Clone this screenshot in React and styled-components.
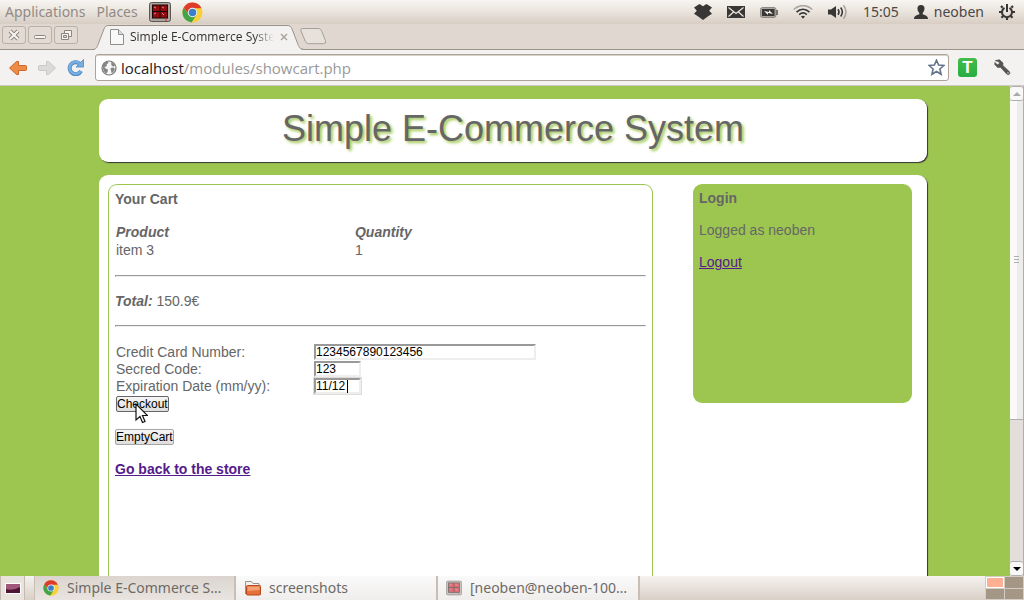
import React from "react";
import styled, { createGlobalStyle } from "styled-components";

const green = "#9dc650";
const ui = `"Noto Sans", "Open Sans", sans-serif`;
const uiNarrow = `"Open Sans", "Noto Sans", sans-serif`;

const GlobalStyle = createGlobalStyle`
  *, *::before, *::after { box-sizing: border-box; }
  body { margin: 0; font-family: "Liberation Sans", Arial, sans-serif; font-size: 14px; line-height: 16px; color: #666; }
  button, input { font-family: inherit; }
  svg { display: block; flex: none; }
`;

const Desktop = styled.div`
  height: 100vh;
  display: flex;
  flex-direction: column;
  overflow: hidden;
`;

/* ---------- top panel ---------- */
const Panel = styled.header`
  flex: none;
  height: 24px;
  display: flex;
  align-items: center;
  justify-content: space-between;
  padding: 0 9px 0 5px;
  background: linear-gradient(#f7f5f2, #e9e3dc 50%, #d7cdc3);
  font: 14px/24px ${ui};
  color: #4b4846;
`;
const PanelGroup = styled.div`
  display: flex;
  align-items: center;
  gap: ${(p) => p.$gap}px;
`;
const PanelButton = styled.button`
  display: flex;
  align-items: center;
  gap: 6px;
  height: 24px;
  padding: 0;
  border: 0;
  background: none;
  font: inherit;
  color: ${(p) => (p.$muted ? "#918b86" : "#4b4846")};
`;

/* ---------- browser chrome ---------- */
const TabStrip = styled.div`
  flex: none;
  height: 26px;
  display: flex;
  background: #dfd7d0;
  border-bottom: 1px solid #9c938a;
`;
const WindowButtons = styled.div`
  display: flex;
  gap: 2px;
  padding: 2px 0 0 2px;
`;
const WindowButton = styled.button`
  width: 24px;
  height: 18px;
  padding: 0;
  display: grid;
  place-items: center;
  border: 1px solid #b9b0a7;
  border-radius: 3px;
  background: #e2dad3;
`;
const Tab = styled.div`
  position: relative;
  width: 214px;
  height: 26px;
  margin-left: 14px;
  display: flex;
  align-items: center;
  padding: 0 18px 0 18px;
`;
const TabShape = styled.svg`
  position: absolute;
  inset: 0;
`;
const TabTitle = styled.span`
  position: relative;
  flex: 1;
  margin-left: 6px;
  overflow: hidden;
  white-space: nowrap;
  font: 12px/24px ${uiNarrow};
  color: #33302e;
  mask-image: linear-gradient(90deg, #000 86%, transparent);
`;
const TabIcon = styled.span`
  position: relative;
`;
const TabClose = styled.button`
  position: relative;
  width: 8px;
  height: 8px;
  margin-left: 6px;
  padding: 0;
  border: 0;
  background: none;
`;
const NewTab = styled.button`
  padding: 4px 0 0;
  border: 0;
  background: none;
  align-self: flex-start;
  margin-left: -7px;
`;
const Toolbar = styled.div`
  flex: none;
  height: 36px;
  display: flex;
  align-items: center;
  padding: 0 13px 0 8px;
  background: #f4f2f1;
  border-bottom: 1px solid #cfc9c3;
`;
const ToolButton = styled.button`
  padding: 0;
  margin-right: ${(p) => p.$after || 0}px;
  border: 0;
  background: none;
`;
const AddressBar = styled.div`
  flex: 1;
  height: 27px;
  display: flex;
  align-items: center;
  gap: 4px;
  padding: 0 3px 0 5px;
  margin-right: 9px;
  background: #fff;
  border: 1px solid #aea398;
  border-radius: 3px;
  box-shadow: inset 0 1px 0 #d8d2cc;
`;
const Url = styled.span`
  flex: 1;
  font: 15px/24px ${uiNarrow};
  color: #999;
  b { font-weight: 400; color: #222; }
`;

/* ---------- web page ---------- */
const Viewport = styled.div`
  flex: 1;
  min-height: 0;
  display: flex;
`;
const Page = styled.main`
  flex: 1;
  min-width: 0;
  display: flex;
  flex-direction: column;
  gap: 13px;
  padding: 13px 82px 0 99px;
  overflow: hidden;
  background: ${green};
`;
const Banner = styled.div`
  flex: none;
  padding: 10px 0 13px;
  background: #fff;
  border-radius: 9px;
  box-shadow: 1px 1px 1px #333;
`;
const Title = styled.h1`
  margin: 0;
  font-size: 36px;
  line-height: 40px;
  font-weight: 400;
  text-align: center;
  text-shadow: 2px 2px 3px ${green};
`;
const Card = styled.div`
  flex: 1;
  display: flex;
  align-items: flex-start;
  gap: 40px;
  padding: 9px 15px 0 9px;
  background: #fff;
  border-radius: 9px 9px 0 0;
  box-shadow: 1px 1px 1px #333;
`;
const Cart = styled.section`
  flex: 1;
  align-self: stretch;
  padding: 6px;
  border: 1px solid ${green};
  border-bottom: 0;
  border-radius: 9px 9px 0 0;
`;
const Login = styled.aside`
  width: 219px;
  min-height: 219px;
  padding: 6px;
  background: ${green};
  border-radius: 9px;
`;
const Heading = styled.h2`
  margin: 0;
  font-size: 14px;
  line-height: 16px;
`;
const Text = styled.p`
  margin: 16px 0;
`;
const Link = styled.a`
  color: #551a8b;
  font-weight: ${(p) => (p.$strong ? 700 : 400)};
`;
const Products = styled.table`
  width: 100%;
  margin-top: 16px;
  border-collapse: collapse;
  table-layout: fixed;
  th, td { height: 18px; padding: 0 1px; text-align: left; }
  th { font-style: italic; }
  th:first-child { width: 45%; }
`;
const Rule = styled.hr`
  height: 2px;
  margin: 16px 0;
  border: 1px solid #eee;
  border-top-color: #999;
  border-left-color: #999;
`;
const Form = styled.form`
  padding: 1px 0 0 1px;
`;
const Field = styled.div`
  display: flex;
  align-items: flex-start;
  height: 17px;
  label { width: 198px; line-height: 16px; }
`;
const InputWrap = styled.div`
  position: relative;
  display: flex;
`;
const Input = styled.input`
  width: ${(p) => p.$width}px;
  height: 16px;
  padding: 0;
  border: 2px solid #eee;
  border-top-color: #999;
  border-left-color: #999;
  outline: 0;
  background: #fff;
  font-size: 12px;
  color: #000;
  box-shadow: ${(p) => (p.$active ? "0 0 0 1px #e3dcd6" : "none")};
`;
const Caret = styled.i`
  position: absolute;
  left: 33px;
  top: 2px;
  width: 1px;
  height: 13px;
  background: #000;
`;
const ButtonRow = styled.div`
  position: relative;
  display: flex;
  margin-top: ${(p) => p.$space}px;
`;
const Button = styled.button`
  height: 16px;
  padding: 0;
  border: 1px solid ${(p) => (p.$hover ? "#666" : "#a6a6a6")};
  border-radius: 2px;
  background: linear-gradient(#f6f6f6, #dedede);
  font-size: 12px;
  line-height: 14px;
  color: #000;
`;
const Pointer = styled.svg`
  position: absolute;
  left: 19px;
  top: 7px;
`;

/* ---------- scrollbar ---------- */
const Scrollbar = styled.div`
  width: 15px;
  display: flex;
  flex-direction: column;
  background: #e3ded9;
  border: solid #aeaeae;
  border-width: 0 1px;
`;
const ScrollButton = styled.button`
  flex: none;
  height: 15px;
  padding: 0;
  display: grid;
  place-items: center;
  border: 1px solid #aeaeae;
  border-width: 1px 0;
  border-radius: 3px;
  background: #faf8f6;
`;
const Thumb = styled.div`
  flex: 0 0 65%;
  margin-bottom: auto;
  display: grid;
  place-items: center;
  border-bottom: 1px solid #aeaeae;
  background: linear-gradient(90deg, #fbfaf9 55%, #edecea 55%);
`;

/* ---------- task bar ---------- */
const Taskbar = styled.footer`
  flex: none;
  height: 24px;
  display: flex;
  background: linear-gradient(#f5f2ef, #d9d0c7);
`;
const ShowDesktop = styled.button`
  width: 25px;
  padding: 0;
  margin-right: 9px;
  display: grid;
  place-items: center;
  border: solid #c4bab1;
  border-width: 0 1px;
  background: #e9e3de;
`;
const Task = styled.button`
  flex: 0 1 202px;
  min-width: 0;
  display: flex;
  align-items: center;
  gap: 8px;
  padding: 0 4px 0 8px;
  border: 0 solid #c8beb5;
  border-width: 0 2px 0 ${(p) => (p.$active ? 1 : 0)}px;
  background: ${(p) => (p.$active ? "linear-gradient(#dcd5cf, #e9e4e0)" : "linear-gradient(#fafafa, #f0eeec)")};
  font: 14px/24px ${ui};
  color: #6e6965;
  white-space: nowrap;
`;
const Workspaces = styled.div`
  width: 39px;
  margin-left: auto;
  display: grid;
  grid-template: 1fr 1fr / 1fr 1fr;
  gap: 1px;
  padding: 1px;
  background: #d5cdc5;
`;
const Workspace = styled.button`
  padding: 0;
  border: ${(p) => (p.$active ? "1px solid #fff" : "0")};
  background: ${(p) => (p.$active ? "#ffb093" : "#a49786")};
`;

/* ---------- drawings ---------- */
const ChromeLogo = ({ size }) => (
  <svg width={size} height={size} viewBox="0 0 24 24" aria-hidden="true">
    <circle cx="12" cy="12" r="11.5" fill="#f9d038" />
    <path d="M1.9 6.4A11.5 11.5 0 0 0 11 23.4L16.4 14.5 7.6 14.5z" fill="#3fa548" />
    <path d="M1.9 6.4A11.5 11.5 0 0 1 22.3 7H12L7.6 14z" fill="#de3b2d" />
    <circle cx="12" cy="12" r="5.4" fill="#f4f4f4" />
    <circle cx="12" cy="12" r="4.3" fill="#3b7fca" />
  </svg>
);
const Terminator = ({ small }) => (
  <svg width={small ? 16 : 22} height={small ? 16 : 20} viewBox="0 0 22 20" opacity={small ? 0.6 : 1} aria-hidden="true">
    <rect x=".5" y=".5" width="21" height="19" rx="2" fill="#aaa69f" stroke="#5b5853" />
    <rect x="3" y="2.5" width="16" height="14" fill="#1b0505" />
    <path d="M4 3.5h6.5v5.5H4zM11.5 3.5H18v5.5h-6.5zM4 10h6.5v5.5H4zM11.5 10H18v5.5h-6.5z" fill={small ? "#cf1a25" : "#920d12"} />
    <path d="M5 5l2 1M13 5l2 1M5 12l2-1M13 11l2 2" stroke="#f08080" />
    <path d="M16 18h2" stroke="#e22" />
  </svg>
);
const Dropbox = () => (
  <svg width="18" height="16" viewBox="0 0 18 16" fill="#393735" aria-hidden="true">
    <path d="M5.500 0 9 2.200 12.500 0 18 3.600 15.200 6.700 18 9.800 14.500 12 9 16 3.500 12 0 9.800 2.800 6.700 0 3.600z" />
  </svg>
);
const Mail = () => (
  <svg width="18" height="12" viewBox="0 0 18 12" aria-hidden="true">
    <path d="M0 0h18v12H0z" fill="#393735" />
    <path d="M1.5 1.5 9 7.5l7.5-6M1.5 10.5l5-4.5M16.500 10.500l-5-4.500" fill="none" stroke="#eee9e3" strokeWidth="1.200" />
  </svg>
);
const Battery = () => (
  <svg width="18" height="11" viewBox="0 0 18 11" aria-hidden="true">
    <rect x=".5" y=".5" width="15.500" height="10" rx="2" fill="#aaa59f" stroke="#8d8984" />
    <path d="M16 3h2v5h-2z" fill="#77726d" />
    <rect x="2" y="2" width="12.500" height="7" fill="#393735" />
    <path d="m4 4 5 1 0-2 4 4-5-1 0 2z" fill="#f2efeb" />
  </svg>
);
const Wifi = () => (
  <svg width="20" height="14" viewBox="0 0 20 14" fill="none" strokeWidth="1.700" aria-hidden="true">
    <path d="M.8 4.500C6-.6 14-.6 19.200 4.500" stroke="#aaa59f" />
    <path d="M3.500 7.200c4-3.800 9-3.800 13 0M6.200 9.700c2.400-2.200 5.200-2.200 7.600 0" stroke="#393735" />
    <path d="M8 11.500q2-1.400 4 0l-2 2.200z" fill="#393735" />
  </svg>
);
const Volume = () => (
  <svg width="20" height="16" viewBox="0 0 20 16" fill="none" strokeWidth="1.600" aria-hidden="true">
    <path d="M0 5.500h3L8 2v12l-5-3.500H0z" fill="#393735" />
    <path d="M10 5.200q2 2.800 0 5.600M12.700 3.500q3.300 4.500 0 9" stroke="#393735" />
    <path d="M15.500 1.200q5 6.800 0 13.600" stroke="#aaa59f" />
  </svg>
);
const Person = () => (
  <svg width="14" height="14" viewBox="0 0 14 14" fill="#393735" aria-hidden="true">
    <path d="M7 0c5 0 3.800 6 1.700 8v1.300c1 1 5.300.7 5.300 4.700H0c0-4 4.300-3.700 5.300-4.700V8C3.200 6 2 0 7 0z" />
  </svg>
);
const Power = () => (
  <svg width="16" height="16" viewBox="0 0 16 16" fill="none" stroke="#393735" aria-hidden="true">
    <path d="M5.500 3.800a5 5 0 1 0 5 0" strokeWidth="2" />
    <path d="M8 0v8" strokeWidth="2" />
    <path d="M3.600 3.600 2 2M12.400 3.600 14 2M3 8H0M13 8h3M4.200 12 2.500 13.700M11.800 12l1.700 1.700M8 13v3" strokeWidth="2.200" />
  </svg>
);
const Arrow = ({ flip, fill, stroke }) => (
  <svg width="20" height="16" viewBox="0 0 20 16" aria-hidden="true">
    <path d={flip ? "M18.500 8l-7-6.500h-2v4h-7q-1 0-1 1v3q0 1 1 1h7v4h2z" : "M1.500 8l7-6.500h2v4h7q1 0 1 1v3q0 1-1 1h-7v4h-2z"} fill={fill} stroke={stroke} strokeLinejoin="round" />
  </svg>
);
const Reload = () => (
  <svg width="17" height="17" viewBox="0 0 17 17" aria-hidden="true">
    <path d="M14 12a6 6 0 1 1-1.500-7.500" fill="none" stroke="#4a86c4" strokeWidth="4" />
    <path d="M16.500.500v7.500h-7.500z" fill="#78ade0" stroke="#4a86c4" strokeWidth=".8" />
    <path d="M13.700 12a6 6 0 1 1-1-7.500" fill="none" stroke="#78ade0" strokeWidth="2.600" />
  </svg>
);
const Globe = () => (
  <svg width="16" height="16" viewBox="0 0 16 16" aria-hidden="true">
    <circle cx="8" cy="8" r="7" fill="#f6f6f6" stroke="#777" strokeWidth="1.200" />
    <path d="M2 4.500C3 3 5 1.500 7 1.500L7.500 3 5.500 4.500 6 6 3.500 7 4.500 8.500 7 9.500 6.500 12 5.500 13.500C3 12.500 1 8 2 4.500zM10 2l2.500 1.500L14 6l-2 .5-1.500-1zM9.500 8l3-.5 1.500 1.500-2 3.500-1.500.5z" fill="#858585" />
  </svg>
);
const Star = () => (
  <svg width="17" height="17" viewBox="0 0 17 17" aria-hidden="true">
    <path d="m8.500 1.200 2.100 4.900 5.300.4-4 3.500 1.200 5.300-4.600-2.800-4.600 2.800 1.200-5.300-4-3.500 5.300-.4z" fill="#fff" stroke="#65728d" strokeWidth="1.600" />
  </svg>
);
const Badge = styled.button`
  width: 19px;
  height: 19px;
  margin-right: 17px;
  padding: 0;
  border: 0;
  border-radius: 3px;
  background: linear-gradient(#45bb4a, #27ae43);
  font-size: 17px;
  line-height: 19px;
  font-weight: 700;
  color: #fff;
`;
const Wrench = () => (
  <svg width="17" height="17" viewBox="0 0 17 17" aria-hidden="true">
    <path d="M1.300 1.600 5.500.8 9 4l-.2 2.400 6.700 6.300q1 1.500-.3 2.600-1.300.8-2.500-.3L6.500 8.300 3.600 8.500.8 5.600V3.400L3.400 5.700 5.600 4.600 5.300 3z" fill="#555" stroke="#444" strokeWidth=".6" />
    <circle cx="14" cy="14" r=".8" fill="#ddd" />
  </svg>
);
const Folder = () => (
  <svg width="17" height="16" viewBox="0 0 17 16" aria-hidden="true">
    <path d="M1.500 14V1.500h6l1.500 2h6V6" fill="#f3f1ee" stroke="#98928b" />
    <rect x="2.500" y="5.500" width="14" height="9.500" rx="1" fill="#e5713a" stroke="#b9471c" />
    <path d="M3.500 6.500h12V10l-12 1z" fill="#f2a273" />
  </svg>
);

export default function App() {
  return (
    <Desktop>
      <GlobalStyle />
      <Panel>
        <PanelGroup $gap={11}>
          <PanelButton $muted>Applications</PanelButton>
          <PanelButton $muted>Places</PanelButton>
          <PanelButton aria-label="Terminator"><Terminator /></PanelButton>
          <PanelButton aria-label="Chrome"><ChromeLogo size={21} /></PanelButton>
        </PanelGroup>
        <PanelGroup $gap={15}>
          <PanelButton aria-label="Dropbox"><Dropbox /></PanelButton>
          <PanelButton aria-label="Messages"><Mail /></PanelButton>
          <PanelButton aria-label="Battery"><Battery /></PanelButton>
          <PanelButton aria-label="Network"><Wifi /></PanelButton>
          <PanelButton aria-label="Sound"><Volume /></PanelButton>
          <PanelButton>15:05</PanelButton>
          <PanelButton><Person />neoben</PanelButton>
          <PanelButton aria-label="Session"><Power /></PanelButton>
        </PanelGroup>
      </Panel>

      <TabStrip>
        <WindowButtons>
          <WindowButton aria-label="Close window">
            <svg width="12" height="12" viewBox="0 0 12 12" fill="none">
              <path d="m2 2 8 8m0-8-8 8" stroke="#8d857d" strokeWidth="4" />
              <path d="m2 2 8 8m0-8-8 8" stroke="#f7f5f3" strokeWidth="2" />
            </svg>
          </WindowButton>
          <WindowButton aria-label="Minimise window">
            <svg width="12" height="12" viewBox="0 0 12 12">
              <rect x=".5" y="6.500" width="11" height="3" rx="1" fill="#f7f5f3" stroke="#8d857d" />
            </svg>
          </WindowButton>
          <WindowButton aria-label="Restore window">
            <svg width="12" height="12" viewBox="0 0 12 12" fill="#f7f5f3" stroke="#8d857d">
              <path d="M4.500 1.500h7v6h-7z" />
              <path d="M1.500 4.500h7v6h-7z" />
              <path d="M3.500 6.500h3v2h-3z" fill="#dfd7d0" />
            </svg>
          </WindowButton>
        </WindowButtons>
        <Tab>
          <TabShape width="214" height="26" viewBox="0 0 214 26">
            <path d="M0 25.500c4 0 5-2 6-5L12 5c1-3 2-3.500 5-3.500h178c3 0 4 1 5 3.500l6 15.500c1 3 2 5 8 5" fill="#f4f2f1" stroke="#9c938a" />
            <path d="M3 26h206" stroke="#f4f2f1" strokeWidth="2" />
          </TabShape>
          <TabIcon>
            <svg width="14" height="16" viewBox="0 0 14 16">
              <path d="M.5.5h8l5 5v10H.5z" fill="#f8f8f8" stroke="#8f8f8f" />
              <path d="M8.500.5v5h5" fill="#ddd" stroke="#8f8f8f" />
            </svg>
          </TabIcon>
          <TabTitle>Simple E-Commerce Syster</TabTitle>
          <TabClose aria-label="Close tab">
            <svg width="8" height="8" viewBox="0 0 8 8"><path d="m1 1 6 6m0-6-6 6" stroke="#aaa49e" strokeWidth="1.500" /></svg>
          </TabClose>
        </Tab>
        <NewTab aria-label="New tab">
          <svg width="28" height="19" viewBox="0 0 28 19">
            <path d="M2 3q-1-2.500 1.500-2.500h16q2 0 3 2.200l4 10q1 3-2 3H9.500q-2 0-3-2z" fill="#e7e1db" stroke="#a79f97" />
          </svg>
        </NewTab>
      </TabStrip>

      <Toolbar>
        <ToolButton $after={9} aria-label="Back"><Arrow fill="#ee8c45" stroke="#cb6528" /></ToolButton>
        <ToolButton $after={10} aria-label="Forward"><Arrow flip fill="#dcdad8" stroke="#cbc8c5" /></ToolButton>
        <ToolButton $after={11} aria-label="Reload"><Reload /></ToolButton>
        <AddressBar>
          <Globe />
          <Url><b>localhost</b>/modules/showcart.php</Url>
          <ToolButton aria-label="Bookmark"><Star /></ToolButton>
        </AddressBar>
        <Badge>T</Badge>
        <ToolButton aria-label="Settings"><Wrench /></ToolButton>
      </Toolbar>

      <Viewport>
        <Page>
          <Banner><Title>Simple E-Commerce System</Title></Banner>
          <Card>
            <Cart>
              <Heading>Your Cart</Heading>
              <Products>
                <thead><tr><th>Product</th><th>Quantity</th></tr></thead>
                <tbody><tr><td>item 3</td><td>1</td></tr></tbody>
              </Products>
              <Rule />
              <Text><b><i>Total:</i></b> 150.9€</Text>
              <Rule />
              <Form onSubmit={(e) => e.preventDefault()}>
                <Field>
                  <label htmlFor="card">Credit Card Number:</label>
                  <Input id="card" $width={222} defaultValue="1234567890123456" />
                </Field>
                <Field>
                  <label htmlFor="code">Secred Code:</label>
                  <Input id="code" $width={47} defaultValue="123" />
                </Field>
                <Field>
                  <label htmlFor="date">Expiration Date (mm/yy):</label>
                  <InputWrap>
                    <Input id="date" $width={47} $active defaultValue="11/12" />
                    <Caret />
                  </InputWrap>
                </Field>
                <ButtonRow $space={1}>
                  <Button $hover>Checkout</Button>
                  <Pointer width="13" height="21" viewBox="0 0 13 21">
                    <path d="M1 1v16l4-3.500L7.500 19.500l2.500-1-2.500-6h5z" fill="#fff" stroke="#111" strokeWidth="1.200" />
                  </Pointer>
                </ButtonRow>
              </Form>
              <ButtonRow $space={17}><Button>EmptyCart</Button></ButtonRow>
              <Text><Link href="#store" $strong>Go back to the store</Link></Text>
            </Cart>
            <Login>
              <Heading>Login</Heading>
              <Text>Logged as neoben</Text>
              <Text><Link href="#logout">Logout</Link></Text>
            </Login>
          </Card>
        </Page>
        <Scrollbar>
          <ScrollButton aria-label="Scroll up">
            <svg width="8" height="4" viewBox="0 0 8 4"><path d="M0 4l4-4 4 4z" fill="#aaa" /></svg>
          </ScrollButton>
          <Thumb>
            <svg width="5" height="7" viewBox="0 0 5 7"><path d="M0 .5h5M0 3.500h5M0 6.500h5" stroke="#aeaeae" /></svg>
          </Thumb>
          <ScrollButton aria-label="Scroll down">
            <svg width="8" height="4" viewBox="0 0 8 4"><path d="M0 0l4 4 4-4z" fill="#000" /></svg>
          </ScrollButton>
        </Scrollbar>
      </Viewport>

      <Taskbar>
        <ShowDesktop aria-label="Show desktop">
          <svg width="16" height="11" viewBox="0 0 16 11">
            <rect x=".5" y=".5" width="15" height="10" fill="#4e1534" stroke="#fff" />
            <path d="M1 1h14v3q-7 4-14 2z" fill="#a0587a" />
          </svg>
        </ShowDesktop>
        <Task $active><ChromeLogo size={16} /><span>Simple E-Commerce S…</span></Task>
        <Task><Folder /><span>screenshots</span></Task>
        <Task><Terminator small /><span>[neoben@neoben-100…</span></Task>
        <Workspaces>
          <Workspace $active aria-label="Workspace 1" />
          <Workspace aria-label="Workspace 2" />
          <Workspace aria-label="Workspace 3" />
          <Workspace aria-label="Workspace 4" />
        </Workspaces>
      </Taskbar>
    </Desktop>
  );
}
